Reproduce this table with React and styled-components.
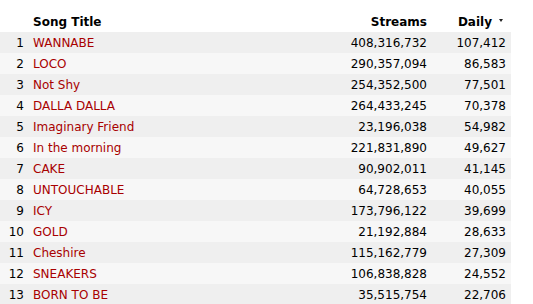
import styled, { createGlobalStyle } from 'styled-components';

const Global = createGlobalStyle`
  html, body { margin: 0; padding: 0; background: #fff; }
  body { font-family: "DejaVu Sans", Verdana, sans-serif; font-size: 12px; color: #000; }
`;

const Table = styled.table`
  width: 511px;
  border-collapse: collapse;
  border-spacing: 0;
  table-layout: fixed;
`;

const Head = styled.th`
  height: 32px;
  padding: 0 ${p => p.$pr || 5}px 3px ${p => p.$pl || 0}px;
  box-sizing: border-box;
  vertical-align: bottom;
  text-align: ${p => p.$align || 'left'};
  font-weight: bold;
  font-size: 12px;
  line-height: 14px;
  white-space: nowrap;
  position: relative;
`;

const SortArrow = styled.span`
  position: absolute;
  right: 8px;
  top: 19px;
  width: 0;
  height: 0;
  border-left: 2.5px solid transparent;
  border-right: 2.5px solid transparent;
  border-top: 3px solid #222;
`;

const Row = styled.tr`
  background: ${p => (p.$odd ? '#efefef' : '#f7f7f7')};
`;

const Cell = styled.td`
  height: 21px;
  box-sizing: border-box;
  padding: 4px ${p => p.$pr ?? 5}px 3px ${p => p.$pl ?? 0}px;
  line-height: 14px;
  text-align: ${p => p.$align || 'left'};
  color: ${p => (p.$red ? '#a80000' : '#000')};
  white-space: nowrap;
  overflow: hidden;
`;

const songs = [
  ['WANNABE', '408,316,732', '107,412'],
  ['LOCO', '290,357,094', '86,583'],
  ['Not Shy', '254,352,500', '77,501'],
  ['DALLA DALLA', '264,433,245', '70,378'],
  ['Imaginary Friend', '23,196,038', '54,982'],
  ['In the morning', '221,831,890', '49,627'],
  ['CAKE', '90,902,011', '41,145'],
  ['UNTOUCHABLE', '64,728,653', '40,055'],
  ['ICY', '173,796,122', '39,699'],
  ['GOLD', '21,192,884', '28,633'],
  ['Cheshire', '115,162,779', '27,309'],
  ['SNEAKERS', '106,838,828', '24,552'],
  ['BORN TO BE', '35,515,754', '22,706'],
];

export default function App() {
  return (
    <>
      <Global />
      <Table>
        <colgroup>
          <col style={{ width: 28 }} />
          <col style={{ width: 277 }} />
          <col style={{ width: 127 }} />
          <col style={{ width: 79 }} />
        </colgroup>
        <thead>
          <tr>
            <Head />
            <Head $pl={5}>Song Title</Head>
            <Head $align="right">Streams</Head>
            <Head $align="right" $pr={19}>
              Daily
              <SortArrow />
            </Head>
          </tr>
        </thead>
        <tbody>
          {songs.map(([title, streams, daily], i) => (
            <Row key={title} $odd={i % 2 === 0}>
              <Cell $align="right" $pr={4}>{i + 1}</Cell>
              <Cell $pl={5} $red>{title}</Cell>
              <Cell $align="right">{streams}</Cell>
              <Cell $align="right">{daily}</Cell>
            </Row>
          ))}
        </tbody>
      </Table>
    </>
  );
}
